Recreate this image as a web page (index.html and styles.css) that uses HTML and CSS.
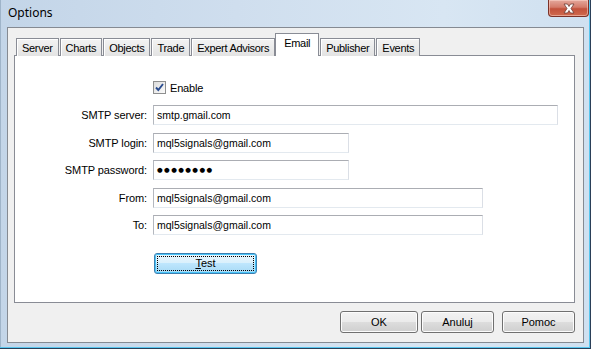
FILE: index.html
```html
<!DOCTYPE html>
<html>
<head>
<meta charset="utf-8">
<link rel="stylesheet" href="styles.css">
</head>
<body>
<div class="window">
  <div class="titlebar">
    <span class="title">Options</span>
    <div class="close">
      <svg width="18" height="11" viewBox="0 0 18 11">
        <path d="M4 1 L7.5 1 L9 3.5 L10.5 1 L14 1 L11 5.5 L14 10 L10.5 10 L9 7.5 L7.5 10 L4 10 L7 5.5 Z" fill="#ffffff" stroke="#6b3a33" stroke-width="0.8"/>
      </svg>
    </div>
  </div>
  <div class="client">
    <div class="tabs">
      <div class="tab">Server</div>
      <div class="tab">Charts</div>
      <div class="tab">Objects</div>
      <div class="tab">Trade</div>
      <div class="tab">Expert Advisors</div>
      <div class="tab active">Email</div>
      <div class="tab">Publisher</div>
      <div class="tab">Events</div>
    </div>
    <div class="panel">
      <div class="form">
        <div></div>
        <div class="check-row">
          <span class="checkbox">
            <svg width="11" height="11" viewBox="0 0 11 11"><path d="M2 5.5 L4.3 8 L9 2" fill="none" stroke="#2a4c8f" stroke-width="1.9"/></svg>
          </span>
          <span class="check-label">Enable</span>
        </div>
        <label class="lbl">SMTP server:</label>
        <div class="field w-wide">smtp.gmail.com</div>
        <label class="lbl">SMTP login:</label>
        <div class="field w-mid">mql5signals@gmail.com</div>
        <label class="lbl">SMTP password:</label>
        <div class="field w-mid pwd">●●●●●●●●</div>
        <label class="lbl">From:</label>
        <div class="field w-long">mql5signals@gmail.com</div>
        <label class="lbl">To:</label>
        <div class="field w-long">mql5signals@gmail.com</div>
        <div></div>
        <div class="test-wrap">
          <div class="btn-test"><span class="focus"><u>T</u>est</span></div>
        </div>
      </div>
    </div>
    <div class="buttons">
      <div class="btn btn-ok">OK</div>
      <div class="btn btn-cancel">Anuluj</div>
      <div class="btn btn-help">Pomoc</div>
    </div>
  </div>
</div>
</body>
</html>
```

FILE: styles.css
```css
html, body {
  margin: 0;
  padding: 0;
  background: #ffffff;
}

.window {
  width: 591px;
  height: 349px;
  box-sizing: border-box;
  padding: 0 7px 6px 7px;
  display: flex;
  flex-direction: column;
  background: linear-gradient(90deg, #c3d5e8 0%, #cfdeee 40%, #d8e6f3 75%, #cfe0f0 100%);
  box-shadow: inset -1px -1px 0 #2a3f58, inset -2px -2px 0 #58c6ee, inset 1px 0 0 #9fb4c9;
  font-family: "Liberation Sans", Arial, sans-serif;
  font-size: 10.5px;
  color: #000;
}

.titlebar {
  height: 27px;
  flex: none;
  display: flex;
  align-items: flex-start;
  justify-content: space-between;
  margin: 0 -5px 0 1px;
}

.title {
  font-family: "Noto Sans", "Open Sans", sans-serif;
  font-size: 12px;
  line-height: 16px;
  margin-top: 5px;
  color: #000;
}

.close {
  width: 41px;
  height: 17px;
  box-sizing: border-box;
  border: 1px solid #7b3127;
  border-top: none;
  border-radius: 0 0 4px 4px;
  background: linear-gradient(#e4a89c 0%, #d47b6a 45%, #c2513b 55%, #d06a4d 100%);
  box-shadow: inset 0 0 0 1px rgba(255, 220, 210, 0.5);
  display: flex;
  align-items: center;
  justify-content: center;
}

.client {
  flex: 1;
  display: flex;
  flex-direction: column;
  background: #f0f0f0;
  border: 1px solid #858a92;
  padding: 6px 8px 8px 6px;
}

.tabs {
  display: flex;
  align-items: flex-end;
  height: 22px;
  padding-left: 2px;
  position: relative;
  z-index: 1;
  margin-bottom: -1px;
}

.tab {
  height: 18px;
  box-sizing: border-box;
  padding: 0 5px;
  margin-right: 1px;
  border: 1px solid #898c95;
  border-bottom: none;
  background: linear-gradient(#f3f3f3, #e3e3e3);
  box-shadow: inset 1px 1px 0 #ffffff;
  line-height: 18px;
  font-size: 11px;
  letter-spacing: -0.3px;
  white-space: nowrap;
}

.tab.active {
  height: 23px;
  background: #ffffff;
  box-shadow: none;
  margin: 0 0 0 -1px;
  padding: 0 8px 0 8px;
  line-height: 18px;
}

.tab.active + .tab {
  margin-left: 1px;
}

.panel {
  height: 248px;
  box-sizing: border-box;
  background: #ffffff;
  border: 1px solid #898c95;
}

.form {
  display: grid;
  grid-template-columns: 132px auto;
  column-gap: 6px;
  row-gap: 7.5px;
  padding-top: 25px;
  align-items: center;
}

.check-row {
  display: flex;
  align-items: center;
  height: 13px;
  margin-bottom: 3.5px;
}

.checkbox {
  width: 13px;
  height: 13px;
  box-sizing: border-box;
  border: 1px solid #8e8f8f;
  background: linear-gradient(135deg, #dcdcdc, #fbfbfb);
  display: flex;
  align-items: center;
  justify-content: center;
}

.check-label {
  margin-left: 4px;
  font-size: 11px;
  letter-spacing: -0.2px;
}

.lbl {
  text-align: right;
  white-space: nowrap;
  font-size: 11px;
  letter-spacing: -0.1px;
}

.field {
  height: 20px;
  box-sizing: border-box;
  border-style: solid;
  border-width: 1px;
  border-color: #abadb3 #dbdfe6 #e3e9ef #b4b8bf;
  background: #ffffff;
  padding-left: 3px;
  line-height: 18px;
  white-space: nowrap;
}

.w-wide { width: 405px; }
.w-mid { width: 196px; }
.w-long { width: 330px; }

.pwd {
  font-size: 6.5px;
  letter-spacing: 1.4px;
  font-family: "DejaVu Sans", sans-serif;
}

.test-wrap {
  padding-top: 10.5px;
  padding-left: 1px;
}

.btn-test {
  width: 103px;
  height: 21px;
  box-sizing: border-box;
  border: 1px solid #3c7fb1;
  border-radius: 3px;
  background: linear-gradient(#eaf6fd 0%, #d9f0fc 50%, #bee6fd 50%, #a7d9f5 100%);
  box-shadow: inset 0 0 0 1px #48c4f8;
  padding: 2px;
  display: flex;
}

.focus {
  flex: 1;
  border: 1px dotted #000;
  text-align: center;
  line-height: 13px;
  font-size: 11px;
}

.buttons {
  display: flex;
  justify-content: flex-end;
  margin-top: 8px;
  height: 22px;
}

.btn {
  height: 22px;
  box-sizing: border-box;
  border: 1px solid #707070;
  border-radius: 3px;
  background: linear-gradient(#f2f2f2 0%, #ebebeb 50%, #dddddd 50%, #cfcfcf 100%);
  box-shadow: inset 0 0 0 1px #fcfcfc;
  text-align: center;
  line-height: 20px;
  font-size: 11px;
}

.btn-ok { width: 78px; margin-right: 3px; }
.btn-cancel { width: 73px; margin-right: 8px; }
.btn-help { width: 73px; }
```
